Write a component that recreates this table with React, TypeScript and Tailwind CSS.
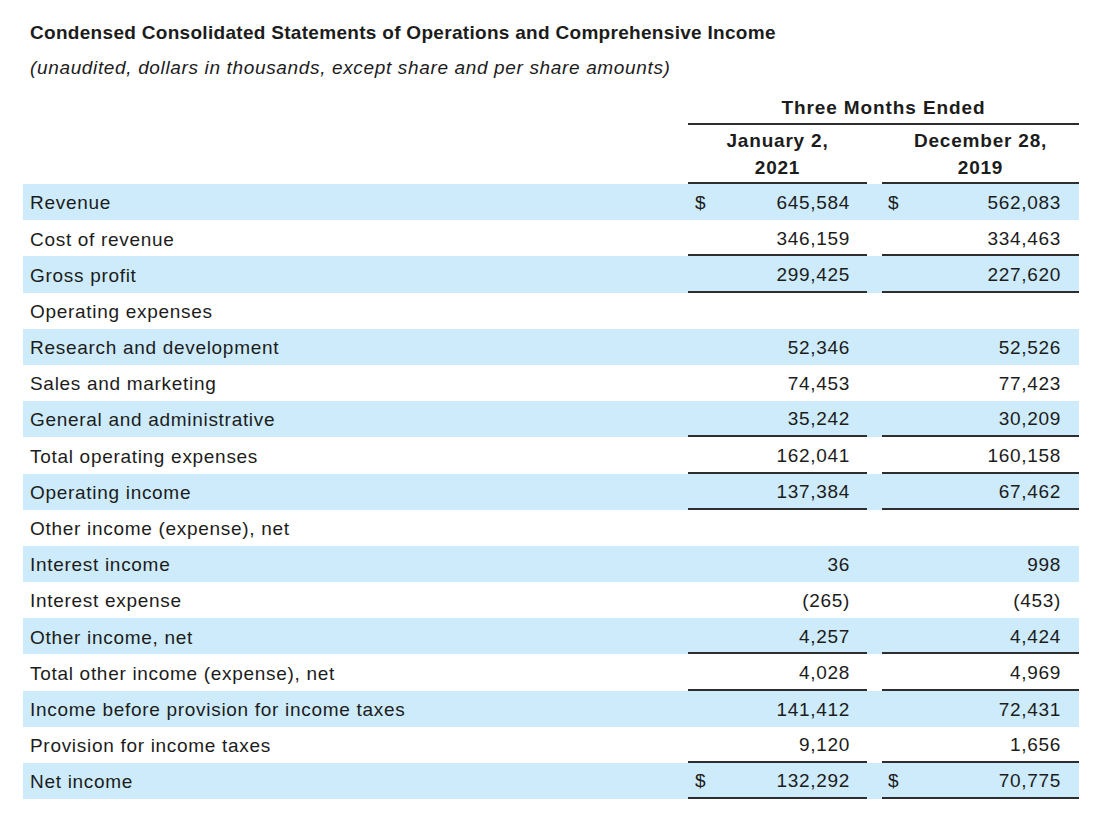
import React from "react";

type Row = {
  label: string;
  a?: string;
  b?: string;
  dollar?: boolean;
  line?: boolean;
};

const rows: Row[] = [
  { label: "Revenue", a: "645,584", b: "562,083", dollar: true },
  { label: "Cost of revenue", a: "346,159", b: "334,463", line: true },
  { label: "Gross profit", a: "299,425", b: "227,620", line: true },
  { label: "Operating expenses" },
  { label: "Research and development", a: "52,346", b: "52,526" },
  { label: "Sales and marketing", a: "74,453", b: "77,423" },
  { label: "General and administrative", a: "35,242", b: "30,209", line: true },
  { label: "Total operating expenses", a: "162,041", b: "160,158", line: true },
  { label: "Operating income", a: "137,384", b: "67,462", line: true },
  { label: "Other income (expense), net" },
  { label: "Interest income", a: "36", b: "998" },
  { label: "Interest expense", a: "(265)", b: "(453)" },
  { label: "Other income, net", a: "4,257", b: "4,424", line: true },
  { label: "Total other income (expense), net", a: "4,028", b: "4,969", line: true },
  { label: "Income before provision for income taxes", a: "141,412", b: "72,431" },
  { label: "Provision for income taxes", a: "9,120", b: "1,656", line: true },
  { label: "Net income", a: "132,292", b: "70,775", dollar: true, line: true },
];

function ValueCell({ value, dollar, line, wide }: { value?: string; dollar?: boolean; line?: boolean; wide?: boolean }) {
  return (
    <div
      className={`flex h-full items-center justify-between pt-[3px] ${wide ? "w-[197px] pl-[6px] pr-[18px]" : "w-[179px] pl-[7px] pr-[17px]"} ${line ? "border-b-2 border-[#2e2e2e]" : ""}`}
    >
      <span>{dollar ? "$" : ""}</span>
      <span>{value ?? ""}</span>
    </div>
  );
}

export default function App() {
  return (
    <div className="min-h-screen bg-white pl-[23px] text-[#1c1c1c]" style={{ fontFamily: '"Liberation Sans", Arial, sans-serif' }}>
      <div className="pt-[21px] pl-[7px] text-[19px] font-bold leading-[24px] tracking-[0.3px]">
        Condensed Consolidated Statements of Operations and Comprehensive Income
      </div>
      <div className="mt-[11px] pl-[7px] text-[19px] italic leading-[24px] tracking-[0.65px]">
        (unaudited, dollars in thousands, except share and per share amounts)
      </div>

      <div className="mt-[14px] flex text-[19px] font-bold tracking-[0.9px]">
        <div className="w-[665px]" />
        <div className="w-[391px] border-b-2 border-[#2e2e2e] pb-[2px] text-center leading-[27px]">
          Three Months Ended
        </div>
      </div>
      <div className="flex text-[19px] font-bold leading-[27px] tracking-[0.8px]">
        <div className="w-[665px]" />
        <div className="w-[179px] border-b-2 border-[#2e2e2e] pt-[2px] pb-[1px] text-center">
          January 2,
          <br />
          2021
        </div>
        <div className="w-[15px]" />
        <div className="w-[197px] border-b-2 border-[#2e2e2e] pt-[2px] pb-[1px] text-center">
          December 28,
          <br />
          2019
        </div>
      </div>

      <div className="w-[1056px] text-[19px] tracking-[0.7px]">
        {rows.map((r, i) => (
          <div key={r.label} className={`flex h-[36.2px] items-center ${i % 2 === 0 ? "bg-[#cdebfa]" : "bg-white"}`}>
            <div className="w-[665px] pt-[3px] pl-[7px]">{r.label}</div>
            <ValueCell value={r.a} dollar={r.dollar} line={r.line} />
            <div className="w-[15px]" />
            <ValueCell value={r.b} dollar={r.dollar} line={r.line} wide />
          </div>
        ))}
      </div>
    </div>
  );
}
